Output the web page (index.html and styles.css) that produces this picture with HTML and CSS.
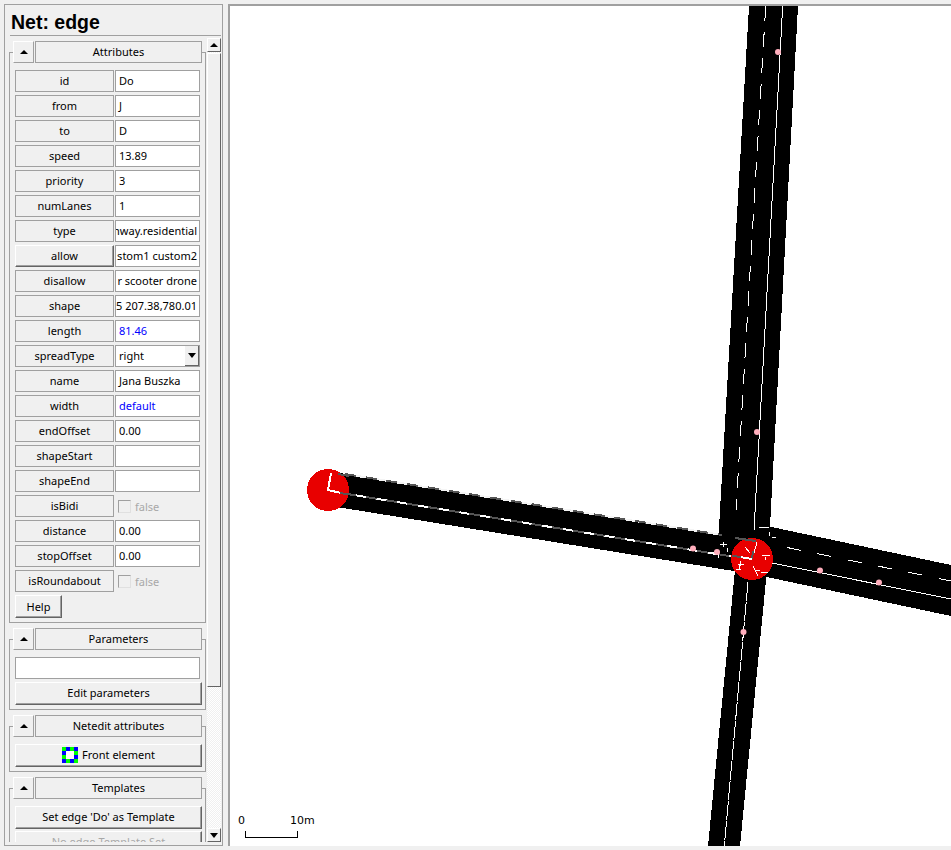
FILE: index.html
```html
<!DOCTYPE html>
<html lang="en">
<head>
    <meta charset="UTF-8">
    <meta name="viewport" content="width=device-width, initial-scale=1.0">
    <title>Net: edge</title>
    <link rel="stylesheet" href="styles.css">
</head>
<body>
<div class="app">
    <aside class="side">
        <h1 class="side-title">Net: edge</h1>
        <div class="side-scroll">
            <div class="side-content">

                <section class="group group-first">
                    <div class="group-head">
                        <button class="btn-collapse"><span class="arrow-up"></span></button>
                        <div class="btn-title">Attributes</div>
                    </div>
                    <div class="row"><div class="lbl">id</div><div class="field">Do</div></div>
                    <div class="row"><div class="lbl">from</div><div class="field">J</div></div>
                    <div class="row"><div class="lbl">to</div><div class="field">D</div></div>
                    <div class="row"><div class="lbl">speed</div><div class="field">13.89</div></div>
                    <div class="row"><div class="lbl">priority</div><div class="field">3</div></div>
                    <div class="row"><div class="lbl">numLanes</div><div class="field">1</div></div>
                    <div class="row"><div class="lbl">type</div><div class="field field-end">hway.residential</div></div>
                    <div class="row"><div class="lbl lbl-raised">allow</div><div class="field field-end">stom1 custom2</div></div>
                    <div class="row"><div class="lbl">disallow</div><div class="field field-end">r scooter drone</div></div>
                    <div class="row"><div class="lbl">shape</div><div class="field field-end">25 207.38,780.01</div></div>
                    <div class="row"><div class="lbl">length</div><div class="field field-blue">81.46</div></div>
                    <div class="row"><div class="lbl">spreadType</div><div class="field field-select">right<span class="select-btn"><span class="arrow-down"></span></span></div></div>
                    <div class="row"><div class="lbl">name</div><div class="field">Jana Buszka</div></div>
                    <div class="row"><div class="lbl">width</div><div class="field field-blue">default</div></div>
                    <div class="row"><div class="lbl">endOffset</div><div class="field">0.00</div></div>
                    <div class="row"><div class="lbl">shapeStart</div><div class="field"></div></div>
                    <div class="row"><div class="lbl">shapeEnd</div><div class="field"></div></div>
                    <div class="row"><div class="lbl">isBidi</div><div class="check"><span class="check-box"></span>false</div></div>
                    <div class="row"><div class="lbl">distance</div><div class="field">0.00</div></div>
                    <div class="row"><div class="lbl">stopOffset</div><div class="field">0.00</div></div>
                    <div class="row"><div class="lbl">isRoundabout</div><div class="check"><span class="check-box"></span>false</div></div>
                    <button class="btn btn-help">Help</button>
                </section>

                <section class="group">
                    <div class="group-head">
                        <button class="btn-collapse"><span class="arrow-up"></span></button>
                        <div class="btn-title">Parameters</div>
                    </div>
                    <div class="field field-wide"></div>
                    <button class="btn btn-wide">Edit parameters</button>
                </section>

                <section class="group">
                    <div class="group-head">
                        <button class="btn-collapse"><span class="arrow-up"></span></button>
                        <div class="btn-title">Netedit attributes</div>
                    </div>
                    <button class="btn btn-wide btn-icon">
                        <svg class="front-icon" width="16" height="16" viewBox="0 0 16 16" shape-rendering="crispEdges">
                            <rect width="16" height="16" fill="#00ff00"/>
                            <rect x="4" width="4" height="4" fill="#0000ff"/>
                            <rect x="12" width="4" height="4" fill="#0000ff"/>
                            <rect y="4" width="4" height="4" fill="#0000ff"/>
                            <rect x="12" y="8" width="4" height="4" fill="#0000ff"/>
                            <rect y="12" width="4" height="4" fill="#0000ff"/>
                            <rect x="8" y="12" width="4" height="4" fill="#0000ff"/>
                            <rect x="4" y="4" width="8" height="8" fill="#ffffff"/>
                        </svg>
                        Front element
                    </button>
                </section>

                <section class="group">
                    <div class="group-head">
                        <button class="btn-collapse"><span class="arrow-up"></span></button>
                        <div class="btn-title">Templates</div>
                    </div>
                    <button class="btn btn-wide">Set edge 'Do' as Template</button>
                    <button class="btn btn-wide btn-disabled">No edge Template Set</button>
                </section>

            </div>
            <div class="scrollbar">
                <div class="scroll-btn"><span class="arrow-up"></span></div>
                <div class="scroll-track"><div class="scroll-thumb"></div></div>
                <div class="scroll-btn"><span class="arrow-down"></span></div>
            </div>
        </div>
    </aside>

    <main class="canvas">
        <!-- viewBox uses window coordinates so the network can be read off the screenshot -->
        <svg class="net" width="721" height="840" viewBox="230 6 721 840" shape-rendering="crispEdges">
            <!-- road surfaces -->
            <polygon points="749,6 798,6 769,545 718,545" fill="#000"/>
            <polygon points="735,570 767,570 740,846 708,846" fill="#000"/>
            <polygon points="340,473 720,535 740,572 340,507.5" fill="#000"/>
            <polygon points="762,525 951,565 951,616 762,576" fill="#000"/>
            <polygon points="718,535 772,527 772,576 735,572" fill="#000"/>

            <!-- left road: edge and centre markings -->
            <line x1="345" y1="474" x2="722" y2="535" stroke="#f4f4f4" stroke-width="2"/>
            <line x1="345" y1="474" x2="722" y2="535" stroke="#555" stroke-width="2" stroke-dasharray="11 10"/>
            <line x1="345" y1="493.6" x2="735" y2="557" stroke="#fff" stroke-width="2"/>
            <line x1="345" y1="493.6" x2="735" y2="557" stroke="#555" stroke-width="2" stroke-dasharray="11 10"/>

            <!-- north road -->
            <line x1="782.7" y1="6" x2="754" y2="530" stroke="#fff"/>
            <line x1="765.7" y1="6" x2="736" y2="510" stroke="#fff" stroke-dasharray="15 11"/>

            <!-- south road -->
            <line x1="748" y1="582" x2="724.3" y2="846" stroke="#fff" stroke-dasharray="19 1"/>

            <!-- east road -->
            <line x1="772" y1="563" x2="951" y2="599" stroke="#fff"/>
            <line x1="787" y1="547.5" x2="951" y2="581" stroke="#fff" stroke-dasharray="14 17"/>

            <!-- junctions -->
            <circle cx="328" cy="490" r="21" fill="#e80000"/>
            <circle cx="752" cy="559" r="21" fill="#e80000"/>

            <!-- junction markings -->
            <polyline points="331,473 328,490 345,494" fill="none" stroke="#fff" stroke-width="2"/>
            <line x1="338" y1="474" x2="349" y2="476" stroke="#555" stroke-width="2"/>
            <line x1="340" y1="493" x2="349" y2="494.5" stroke="#555" stroke-width="2"/>

            <g stroke="#fff" fill="none">
                <line x1="745" y1="547" x2="750" y2="553"/>
                <line x1="757" y1="542" x2="754" y2="553"/>
                <line x1="762" y1="555" x2="770" y2="556"/>
                <line x1="765" y1="557" x2="765" y2="560"/>
                <line x1="738" y1="564" x2="744" y2="565"/>
                <line x1="741" y1="561" x2="739" y2="570"/>
                <line x1="736" y1="569" x2="741" y2="570"/>
                <line x1="753" y1="566" x2="758" y2="576"/>
                <line x1="755" y1="571" x2="760" y2="570"/>
                <line x1="761" y1="572" x2="768" y2="573"/>
                <line x1="759" y1="527" x2="769" y2="527"/>
                <line x1="769" y1="532" x2="769" y2="536"/>
                <line x1="772" y1="537" x2="776" y2="537"/>
                <line x1="720" y1="544" x2="727" y2="544"/>
                <line x1="723" y1="542" x2="723" y2="547"/>
                <line x1="718" y1="552" x2="718" y2="558"/>
                <line x1="727" y1="548" x2="727" y2="552"/>
            </g>
            <line x1="752" y1="559" x2="753" y2="551" stroke="#555" stroke-width="2"/>
            <line x1="740" y1="557" x2="752" y2="559" stroke="#fff" stroke-width="2"/>
            <line x1="732" y1="556" x2="741" y2="557" stroke="#555" stroke-width="2"/>
            <line x1="735" y1="538" x2="756" y2="541" stroke="#555" stroke-width="2"/>

            <!-- geometry points -->
            <g fill="#ffaebc" shape-rendering="auto">
                <circle cx="778" cy="52" r="3"/>
                <circle cx="757" cy="432" r="3"/>
                <circle cx="743.5" cy="632" r="3"/>
                <circle cx="820" cy="570.5" r="3"/>
                <circle cx="879" cy="582.5" r="3"/>
                <circle cx="693" cy="548.5" r="3"/>
                <circle cx="717" cy="552" r="3"/>
            </g>

            <!-- scale -->
            <polyline points="245.5,831 245.5,837.5 297.5,837.5 297.5,831" fill="none" stroke="#000"/>
            <text class="scale-text" x="238" y="824">0</text>
            <text class="scale-text" x="290" y="824">10m</text>
        </svg>
    </main>
</div>
</body>
</html>
```

FILE: styles.css
```css
* {
    box-sizing: border-box;
}

html, body {
    margin: 0;
    padding: 0;
    height: 850px;
    overflow: hidden;
}

body {
    background-color: #f0f0f0;
    font-family: "Noto Sans", sans-serif;
    font-size: 11px;
    color: #000;
}

.app {
    display: flex;
    align-items: flex-start;
    padding: 4px 0 0 4px;
}

/* left frame */
.side {
    width: 219px;
    height: 842px;
    margin-right: 5px;
    padding: 0 0 3px 0;
    border: 1px solid #a0a0a0;
    display: flex;
    flex-direction: column;
}

.side-title {
    margin: 0 1px 0 5px;
    height: 31px;
    padding: 5px 0 0 1px;
    border-bottom: 1px solid #a0a0a0;
    font-family: "Liberation Sans", sans-serif;
    font-size: 19.5px;
    font-weight: bold;
    line-height: 24px;
}

.side-scroll {
    flex: 1;
    min-height: 0;
    margin-top: 2px;
    display: flex;
}

.side-content {
    width: 202px;
    height: 100%;
    padding-left: 4px;
    overflow: hidden;
}

/* groups */
.group {
    width: 197px;
    margin-top: 16px;
    padding: 17px 5px 4px 5px;
    border: 1px solid #a0a0a0;
}

.group-first {
    margin-top: 14px;
}

.group-head {
    display: flex;
    gap: 1px;
    margin: -29px 0 6px -2px;
    height: 23px;
    background-color: #f0f0f0;
}

.btn-collapse {
    width: 21px;
    height: 22px;
    flex: none;
    padding: 0;
    border: 1px solid #a0a0a0;
    border-left-color: #fff;
    border-top-color: #fff;
    background-color: #f0f0f0;
    display: flex;
    align-items: center;
    justify-content: center;
}

.btn-title {
    width: 167px;
    height: 22px;
    flex: none;
    border: 1px solid #a0a0a0;
    background-color: #f0f0f0;
    text-align: center;
    line-height: 20px;
}

.arrow-up {
    width: 0;
    height: 0;
    border-left: 4px solid transparent;
    border-right: 4px solid transparent;
    border-bottom: 4px solid #000;
}

.arrow-down {
    width: 0;
    height: 0;
    border-left: 4px solid transparent;
    border-right: 4px solid transparent;
    border-top: 5px solid #000;
}

/* attribute rows */
.row {
    display: flex;
    gap: 1px;
    height: 22px;
    margin-bottom: 3px;
}

.lbl {
    width: 99px;
    flex: none;
    border: 1px solid #a0a0a0;
    text-align: center;
    line-height: 20px;
}

.lbl-raised {
    border-color: #fff #646464 #646464 #fff;
    box-shadow: inset -1px -1px 0 #a0a0a0;
}

.field {
    width: 85px;
    height: 22px;
    padding: 0 3px;
    border: 1px solid #a0a0a0;
    background-color: #fff;
    line-height: 20px;
    white-space: nowrap;
    overflow: hidden;
}

.field-end {
    display: flex;
    justify-content: flex-end;
    padding: 0 2px 0 0;
}

.field-blue {
    color: #0000ff;
}

.field-select {
    position: relative;
}

.select-btn {
    position: absolute;
    top: 0;
    right: 0;
    width: 14px;
    height: 20px;
    border-right: 1px solid #646464;
    border-bottom: 1px solid #646464;
    background-color: #f0f0f0;
    display: flex;
    align-items: center;
    justify-content: center;
}

.field-wide {
    width: 185px;
    margin-bottom: 3px;
}

.check {
    display: flex;
    align-items: center;
    color: #a8a8a8;
}

.check-box {
    width: 13px;
    height: 13px;
    margin: 0 4px 0 3px;
    border: 1px solid #a0a0a0;
    border-right-color: #e0e0e0;
    border-bottom-color: #e0e0e0;
}

/* buttons */
.btn {
    display: block;
    height: 23px;
    padding: 0 0 2px 0;
    border: 1px solid #a0a0a0;
    border-color: #fff #646464 #646464 #fff;
    box-shadow: inset -1px -1px 0 #a0a0a0;
    background-color: #f0f0f0;
    font: inherit;
    color: inherit;
    text-align: center;
}

.btn-help {
    width: 47px;
    margin-top: 3px;
    padding-bottom: 0;
}

.btn-wide {
    width: 187px;
}

.btn-icon {
    display: flex;
    align-items: center;
    justify-content: center;
    gap: 4px;
}

.btn-disabled {
    margin-top: 2px;
    color: #a8a8a8;
}

/* sidebar scrollbar */
.scrollbar {
    width: 14px;
    height: 100%;
    display: flex;
    flex-direction: column;
}

.scroll-btn {
    height: 14px;
    flex: none;
    border-top: 1px solid #fff;
    border-left: 1px solid #fff;
    border-right: 1px solid #646464;
    border-bottom: 1px solid #646464;
    background-color: #f0f0f0;
    display: flex;
    align-items: center;
    justify-content: center;
}

.scroll-track {
    flex: 1;
    background: repeating-conic-gradient(#fff 0 25%, #f0f0f0 0 50%) 0 0 / 2px 2px;
}

.scroll-thumb {
    height: 634px;
    margin-top: 1px;
    background-color: #f0f0f0;
    border: 1px solid #a0a0a0;
    border-color: #fff #646464 #646464 #fff;
}

/* network view */
.canvas {
    width: 723px;
    height: 842px;
    border-top: 2px solid #a0a0a0;
    border-left: 2px solid #a0a0a0;
    background-color: #fff;
    overflow: hidden;
}

.net {
    display: block;
}

.scale-text {
    font-family: "DejaVu Sans", sans-serif;
    font-size: 11px;
    fill: #000;
}
```
